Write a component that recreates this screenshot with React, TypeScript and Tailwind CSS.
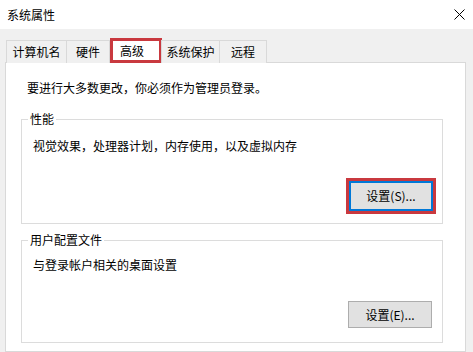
const font = { fontFamily: '"Noto Sans CJK SC", "Noto Sans", sans-serif' }

const tabs = [
  { label: "计算机名", w: "w-[61px]" },
  { label: "硬件", w: "w-[44px]" },
  { label: "高级", w: "w-[52px]", active: true },
  { label: "系统保护", w: "w-[59px]" },
  { label: "远程", w: "w-[48px]" },
]

function CloseIcon() {
  return (
    <svg width="11" height="11" viewBox="0 0 11 11" className="text-black">
      <path d="M0.5 0.5 L10.5 10.5 M10.5 0.5 L0.5 10.5" stroke="currentColor" strokeWidth="1" fill="none" />
    </svg>
  )
}

export default function App() {
  return (
    <div
      className="flex h-[352px] w-[473px] flex-col overflow-hidden bg-[#f0f0f0] text-[12px] leading-[16px] text-black"
      style={font}
    >
      {/* title bar */}
      <div className="flex h-[29px] shrink-0 items-center justify-between bg-white pl-[7px] pr-[8px]">
        <span>系统属性</span>
        <CloseIcon />
      </div>

      {/* tabs */}
      <div className="relative z-10 -mb-px mt-[9px] flex h-[25px] items-end pl-[6px]">
        {tabs.map((t) =>
          t.active ? (
            <div
              key={t.label}
              className={`${t.w} flex h-[25px] items-start border-[3px] border-[#c9393f] bg-white pl-[7px] pt-[2px]`}
            >
              {t.label}
            </div>
          ) : (
            <div
              key={t.label}
              className={`${t.w} flex h-[23px] items-center justify-center border border-b-0 border-[#d9d9d9] bg-[#f0f0f0] -ml-px first:ml-0`}
            >
              {t.label}
            </div>
          )
        )}
      </div>

      {/* panel */}
      <div className="ml-[5px] mr-[7px] flex-1 border border-[#d9d9d9] bg-white pl-[15px] pr-[22px] pt-[17px]">
        <p className="pl-[6px]">要进行大多数更改，你必须作为管理员登录。</p>

        <fieldset className="mt-[15px] border border-[#dcdcdc] px-0 pb-[9px]">
          <legend className="ml-[6px] px-[2px]">性能</legend>
          <p className="mt-[11px] pl-[11px]">视觉效果，处理器计划，内存使用，以及虚拟内存</p>
          <div className="mt-[24px] flex justify-end pr-[6px]">
            <div className="border-[3px] border-[#c9393f]">
              <button className="flex h-[30px] w-[84px] items-center justify-center border-2 border-[#0078d7] bg-[#e1e1e1]">
                设置(S)...
              </button>
            </div>
          </div>
        </fieldset>

        <fieldset className="mt-[8px] border border-[#dcdcdc] px-0 pb-[14px]">
          <legend className="ml-[6px] px-[2px]">用户配置文件</legend>
          <p className="mt-[9px] pl-[11px]">与登录帐户相关的桌面设置</p>
          <div className="mt-[28px] flex justify-end pr-[10px]">
            <button className="flex h-[27px] w-[84px] items-center justify-center border border-[#adadad] bg-[#e1e1e1]">
              设置(E)...
            </button>
          </div>
        </fieldset>
      </div>
    </div>
  )
}
